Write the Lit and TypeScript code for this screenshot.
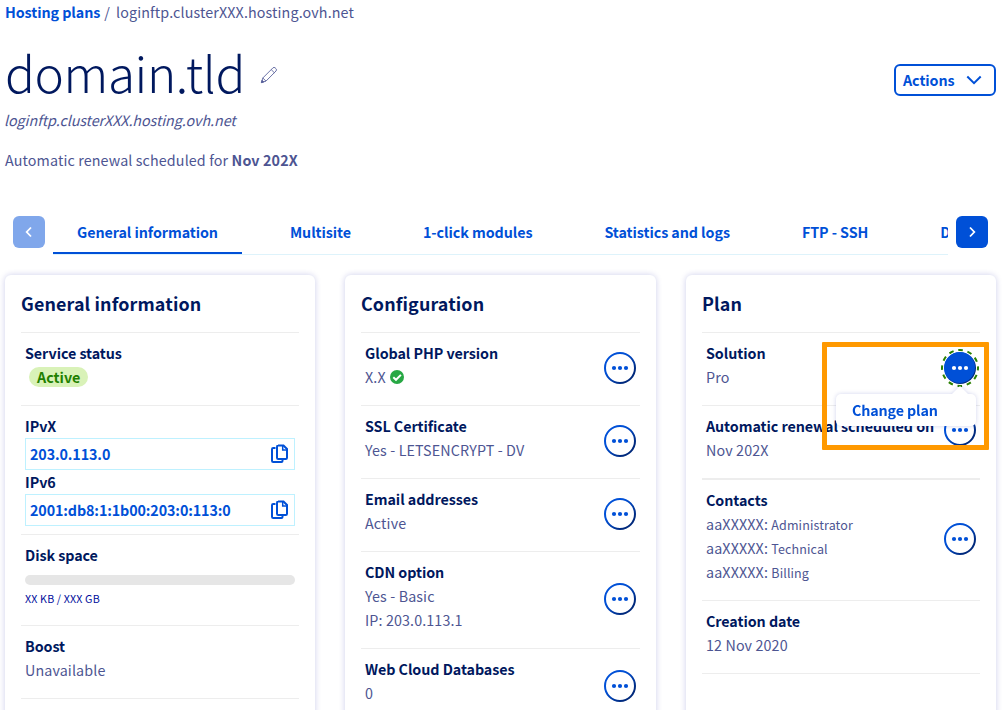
import { LitElement, html, css, svg, nothing, type TemplateResult } from "lit";
import { customElement, property } from "lit/decorators.js";

@customElement("more-button")
class MoreButton extends LitElement {
  @property({ type: Boolean }) active = false;

  static styles = css`
    :host { display: block; width: 38px; height: 38px; margin: -4px -3px -2px; flex: none; }
    svg { display: block; }
  `;

  render() {
    return html`<svg width="38" height="38" viewBox="0 0 38 38">
      <defs>
        <linearGradient id="ring" x1="0" y1="0" x2="1" y2="1">
          <stop offset="0.35" stop-color="#0050d7"></stop>
          <stop offset="0.8" stop-color="#00297c"></stop>
        </linearGradient>
      </defs>
      ${this.active
        ? svg`<circle cx="19" cy="19" r="18" fill="#fff" stroke="#2b8000" stroke-width="2" stroke-dasharray="4.7 4.72" stroke-dashoffset="2.3"></circle>
              <circle cx="19" cy="19" r="16" fill="url(#ring)"></circle>
              <circle cx="18.7" cy="18.6" r="15.3" fill="#0050d7"></circle>`
        : svg`<circle cx="19" cy="19" r="15" fill="#fff" stroke="url(#ring)" stroke-width="2"></circle>`}
      <g fill=${this.active ? "#fff" : "#0050d7"}>
        <circle cx="13" cy="19" r="2.1"></circle>
        <circle cx="19" cy="19" r="2.1"></circle>
        <circle cx="25" cy="19" r="2.1"></circle>
      </g>
    </svg>`;
  }
}

interface Row {
  label: string;
  body: TemplateResult;
  more?: "plain" | "active";
  kind?: string;
}

const copyIcon = html`<svg class="copy" width="18" height="20" viewBox="0 0 18 20" fill="none" stroke="#0050d7" stroke-width="2">
  <path d="M4.5 4H2.2Q1 4 1 5.200V16.800Q1 18 2.200 18H10.500Q11.500 18 11.500 17V16"></path>
  <path d="M7 1.500H12.500L16 5V13.800Q16 15 14.800 15H7.200Q6 15 6 13.800V2.700Q6 1.500 7.200 1.500Z"></path>
  <path d="M11.700 2V6H16" stroke-width="1.500"></path>
</svg>`;

const line = (text: string) => html`<div class="value">${text}</div>`;
const address = (text: string) => html`<div class="address"><span>${text}</span>${copyIcon}</div>`;
const contact = (role: string) => html`<div class="value">aaXXXXX: <small>${role}</small></div>`;

const general: Row[] = [
  { label: "Service status", body: html`<div class="value"><span class="badge">Active</span></div>` },
  {
    label: "IPvX",
    kind: "addresses",
    body: html`${address("203.0.113.0")}<div class="label second">IPv6</div>${address("2001:db8:1:1b00:203:0:113:0")}`,
  },
  { label: "Disk space", kind: "disk", body: html`<div class="bar"></div><div class="usage">XX KB / XXX GB</div>` },
  { label: "Boost", body: line("Unavailable") },
  { label: "", body: html`` },
];

const configuration: Row[] = [
  {
    label: "Global PHP version",
    more: "plain",
    body: html`<div class="value check">X.X<svg width="14" height="14" viewBox="0 0 14 14">
      <circle cx="7" cy="7" r="7" fill="#27a844"></circle>
      <path d="M3.300 7.200L6 9.800L10.900 4.900" fill="none" stroke="#fff" stroke-width="2"></path>
    </svg></div>`,
  },
  { label: "SSL Certificate", more: "plain", body: line("Yes - LETSENCRYPT - DV") },
  { label: "Email addresses", more: "plain", body: line("Active") },
  { label: "CDN option", more: "plain", body: html`${line("Yes - Basic")}${line("IP: 203.0.113.1")}` },
  { label: "Web Cloud Databases", more: "plain", kind: "databases", body: line("0") },
];

const plan: Row[] = [
  { label: "Solution", more: "active", body: line("Pro") },
  { label: "Automatic renewal scheduled on", more: "plain", kind: "renewal", body: line("Nov 202X") },
  {
    label: "Contacts",
    more: "plain",
    kind: "contacts",
    body: html`${contact("Administrator")}${contact("Technical")}${contact("Billing")}`,
  },
  { label: "Creation date", body: line("12 Nov 2020") },
  { label: "", body: html`` },
];

const tabs = ["General information", "Multisite", "1-click modules", "Statistics and logs", "FTP - SSH", "Databases"];

@customElement("app-root")
class AppRoot extends LitElement {
  static styles = css`
    :host {
      display: block; position: relative; box-sizing: border-box; width: 1006px; height: 710px;
      overflow: hidden; background: #fff; color: #4d5592;
      font: 14.3px/24px "Noto Sans CJK SC", sans-serif;
      letter-spacing: 0.12px;
      white-space: nowrap;
    }
    * { box-sizing: border-box; }
    header { display: flex; flex-direction: column; height: 216px; padding-left: 5px; }
    .crumbs { display: flex; gap: 4px; height: 26px; }
    .crumbs a { color: #0050d7; font-weight: 700; letter-spacing: -0.07px; }
    .crumbs .here { margin-left: 2px; }
    .heading { display: flex; justify-content: space-between; height: 82px; padding-right: 10px; }
    .name { display: flex; }
    h1 { margin: 0; font-size: 49.500px; font-weight: 300; line-height: 92px; color: #00185e; letter-spacing: -0.4px; }
    .pencil { margin: 40px 0 0 15px; }
    .actions {
      display: flex; align-items: center; justify-content: space-between; width: 102px; height: 32px; margin-top: 38px;
      padding: 0 12px 0 7px; border: 2px solid #0050d7; border-radius: 6px; color: #0050d7; font-weight: 700;
      letter-spacing: -0.07px;
    }
    .login { font-style: italic; margin-left: -1px; letter-spacing: -0.06px; }
    .renew { margin-top: 16px; }
    .renew b { font-weight: 700; }

    nav { display: flex; height: 39px; padding: 0 18px 0 13px; gap: 8px; }
    .arrow { display: grid; place-items: center; flex: none; width: 32px; height: 32px; border-radius: 6px; background: #0050d7; }
    .arrow.off { background: #80a7eb; }
    .tabs { display: flex; flex: 1; min-width: 0; gap: 24px; overflow: hidden; border-bottom: 1px solid #def3fb; }
    .tab { flex: none; height: 38px; padding: 4px 24px 0; color: #0050d7; font-weight: 700; letter-spacing: -0.07px; }
    .tab.on { border-bottom: 2px solid #0050d7; }

    main { display: grid; grid-template-columns: 310px 311px 310px; column-gap: 30px; padding: 20px 0 0 5px; }
    .card { height: 460px; padding: 16px; border-radius: 6px; background: #fff; box-shadow: 0 0 6px rgba(0, 14, 156, 0.2); }
    h2 { margin: 0; height: 41px; font-size: 17.900px; line-height: 24px; font-weight: 700; color: #00185e; }
    .row { display: flex; align-items: center; min-height: 73px; padding: 0 4px; border-top: 1px solid #ededed; }
    .text { flex: 1; align-self: flex-start; padding: 8px 0 16px; }
    .label { color: #00185e; font-weight: 700; height: 24px; letter-spacing: -0.06px; }
    .value { height: 24px; }
    .badge {
      display: inline-block; height: 20px; margin: 2px 0 0 4px; padding: 0 8px; border-radius: 10px;
      background: #d9f2b8; color: #1f8000; font-weight: 700; line-height: 19px; vertical-align: top; letter-spacing: 0;
    }
    .check { display: flex; align-items: center; gap: 4px; }
    .addresses .text { padding-bottom: 8px; }
    .addresses .label { height: 24px; }
    .addresses .second { height: 24px; }
    .address {
      display: flex; align-items: center; justify-content: space-between; width: 270px; height: 32px;
      padding: 0 5px 1px 4px; border: 1px solid #bef1ff; color: #0050d7; font-weight: 700; letter-spacing: -0.11px;
    }
    .disk .text { padding-bottom: 14px; }
    .bar { width: 270px; height: 10px; margin-top: 8px; border-radius: 5px; background: #e6e6e6; }
    .usage { margin-top: 2px; color: #000e9c; font-size: 10.700px; letter-spacing: 0.15px; }
    .databases { min-height: 77px; }
    .renewal more-button { align-self: flex-start; margin-top: 5px; }
    .contacts { border-top-width: 2px; }
    small { font-size: 12.500px; }

    .menu {
      position: absolute; left: 836px; top: 394px; width: 140px; height: 32px; padding: 4px 16px; border-radius: 5px;
      background: #fff; color: #0050d7; font-weight: 700; filter: drop-shadow(0 0 2px rgba(0, 14, 156, 0.18));
      letter-spacing: -0.13px;
    }
    .menu::before {
      content: ""; position: absolute; left: 116px; top: -8px; border: 8px solid transparent; border-top: 0;
      border-bottom-color: #fff;
    }
    .frame { position: absolute; left: 822px; top: 342px; width: 167px; height: 108px; border: 5px solid #ff9900; border-radius: 1px; }
  `;

  private card(title: string, rows: Row[]) {
    return html`<section class="card">
      <h2>${title}</h2>
      ${rows.map(
        (r) => html`<div class="row ${r.kind ?? ""}">
          <div class="text"><div class="label">${r.label}</div>${r.body}</div>
          ${r.more ? html`<more-button ?active=${r.more === "active"}></more-button>` : nothing}
        </div>`
      )}
    </section>`;
  }

  render() {
    return html`
      <header>
        <div class="crumbs"><a>Hosting plans</a><span>/</span><span class="here">loginftp.clusterXXX.hosting.ovh.net</span></div>
        <div class="heading">
          <div class="name">
            <h1>domain.tld</h1>
            <svg class="pencil" width="18" height="18" viewBox="0 0 18 18" fill="none" stroke="#5a629c" stroke-width="0.9">
              <path d="M1.500 16.500L2.800 12L12.900 1.900Q14 0.800 15.200 1.900L16 2.700Q17.100 3.900 16 5L6 15.100Z"></path>
              <path d="M2.800 12L6 15.100M11.200 3.600L14.300 6.700"></path>
              <path d="M1.300 16.700L2 14.200L3.800 16Z" fill="#4d5592"></path>
            </svg>
          </div>
          <div class="actions">Actions<svg width="16" height="10" viewBox="0 0 16 10" fill="none" stroke="#0050d7" stroke-width="2"><path d="M1.300 1.500L8 8.200L14.700 1.500"></path></svg></div>
        </div>
        <div class="login">loginftp.clusterXXX.hosting.ovh.net</div>
        <div class="renew">Automatic renewal scheduled for <b>Nov 202X</b></div>
      </header>
      <nav>
        <div class="arrow off"><svg width="8" height="12" viewBox="0 0 8 12" fill="none" stroke="#fff" stroke-width="1.800"><path d="M6 1.500L1.700 6L6 10.500"></path></svg></div>
        <div class="tabs">${tabs.map((t, i) => html`<div class="tab ${i === 0 ? "on" : ""}">${t}</div>`)}</div>
        <div class="arrow"><svg width="8" height="12" viewBox="0 0 8 12" fill="none" stroke="#fff" stroke-width="1.800"><path d="M2 1.500L6.300 6L2 10.500"></path></svg></div>
      </nav>
      <main>
        ${this.card("General information", general)}
        ${this.card("Configuration", configuration)}
        ${this.card("Plan", plan)}
      </main>
      <div class="menu">Change plan</div>
      <div class="frame"></div>
    `;
  }
}
